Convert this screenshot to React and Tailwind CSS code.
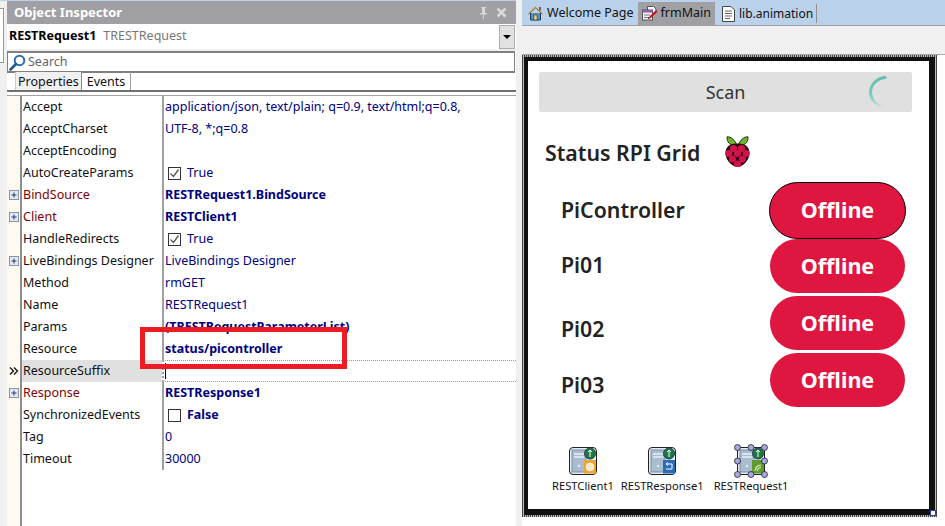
const UI = { fontFamily: '"Noto Sans", sans-serif' };

function Plus() {
  return (
    <svg width="10" height="10" viewBox="0 0 10 10" className="block">
      <rect x="0.5" y="0.5" width="9" height="9" fill="#e4e8f2" stroke="#8a94a8" />
      <path d="M2.5 5h5M5 2.5v5" stroke="#24386a" />
    </svg>
  );
}

function Check({ on }) {
  return (
    <span className="w-[13px] h-[13px] border border-[#333] bg-white flex items-center justify-center shrink-0">
      {on && (
        <svg width="11" height="11" viewBox="0 0 11 11">
          <path d="M1.5 5.5l3 3 5-7" fill="none" stroke="#555" strokeWidth="1.3" />
        </svg>
      )}
    </span>
  );
}

const rows = [
  { n: "Accept", v: "application/json, text/plain; q=0.9, text/html;q=0.8," },
  { n: "AcceptCharset", v: "UTF-8, *;q=0.8" },
  { n: "AcceptEncoding", v: "" },
  { n: "AutoCreateParams", v: "True", c: true },
  { n: "BindSource", v: "RESTRequest1.BindSource", p: true, b: true, r: true },
  { n: "Client", v: "RESTClient1", p: true, b: true, r: true },
  { n: "HandleRedirects", v: "True", c: true },
  { n: "LiveBindings Designer", v: "LiveBindings Designer", p: true },
  { n: "Method", v: "rmGET" },
  { n: "Name", v: "RESTRequest1" },
  { n: "Params", v: "(TRESTRequestParameterList)", b: true },
  { n: "Resource", v: "status/picontroller", b: true },
  { n: "ResourceSuffix", v: "", sel: true },
  { n: "Response", v: "RESTResponse1", p: true, b: true, r: true },
  { n: "SynchronizedEvents", v: "False", c: true, off: true, b: true },
  { n: "Tag", v: "0" },
  { n: "Timeout", v: "30000" },
];

function Row({ row }) {
  return (
    <div className="flex h-[22px] text-[12.5px] leading-[22px]">
      <div className="w-[13px] shrink-0 flex items-center justify-center bg-[#fffaf0]">
        {row.p && <Plus />}
        {row.sel && (
          <svg width="10" height="8" viewBox="0 0 10 8">
            <path d="M1 0.5L4.500 4 1 7.500M5 0.5L8.500 4 5 7.500" fill="none" stroke="#111" strokeWidth="1.300" />
          </svg>
        )}
      </div>
      <div className={`w-[142px] shrink-0 pl-[1px] border-l-2 border-[#8c8c8c] ${row.sel ? "bg-[#e0e0e0]" : "bg-white"} ${row.r ? "text-[#800000]" : "text-[#111]"}`}>
        {row.n}
      </div>
      <div className={`flex-1 border-l-2 border-[#a0a0a0] pl-[1px] bg-white relative whitespace-nowrap overflow-hidden ${row.b ? "font-bold" : ""} text-[#000080] ${row.sel ? "border-y border-dotted border-y-[#999]" : ""}`}>
        {row.c ? (
          <span className="flex items-center h-full pl-[3px] gap-[6px]">
            <Check on={!row.off} />
            <span>{row.v}</span>
          </span>
        ) : row.sel ? (
          <span className="block w-px h-[16px] bg-black mt-[2px]" />
        ) : (
          row.v
        )}
      </div>
    </div>
  );
}

function Home() {
  return (
    <svg width="15" height="15" viewBox="0 0 15 15" className="shrink-0">
      <path d="M2.5 7v7h10V7" fill="#5b8fb0" stroke="#243e55" />
      <path d="M0.8 7.5L7.5 1l6.7 6.5" fill="none" stroke="#d9b64a" strokeWidth="1.5" />
      <path d="M0.5 8.2L7.5 1.8l7 6.4" fill="none" stroke="#243e55" strokeWidth="0.6" />
      <rect x="6" y="9" width="3" height="5" fill="#f2d98a" stroke="#243e55" strokeWidth="0.6" />
      <rect x="11" y="1" width="2" height="3.5" fill="#7a4f9a" />
    </svg>
  );
}

function FormIcon() {
  return (
    <svg width="16" height="15" viewBox="0 0 16 15" className="shrink-0">
      <path d="M5.5 0.5h6l2.5 2.5v4h-8.5z" fill="#fff" stroke="#555" />
      <rect x="0.5" y="4" width="10" height="10" fill="#f4f4f4" stroke="#555" />
      <rect x="0.5" y="4" width="10" height="2.5" fill="#8e5bb0" />
      <path d="M2 9h6M2 11.5h5" stroke="#777" />
      <path d="M6 13l2-3 6-6 1.5 1.5-6 6z" fill="#c4161c" />
      <path d="M6 13l.8-2 1.2 1.2z" fill="#222" />
    </svg>
  );
}

function DocIcon() {
  return (
    <svg width="13" height="16" viewBox="0 0 13 16" className="shrink-0">
      <path d="M0.5 0.5h8.5l3.5 3.5v11.5H0.5z" fill="#fff" stroke="#444" />
      <path d="M3 5h7M3 7.5h7M3 10h7M3 12.5h5" stroke="#666" />
    </svg>
  );
}

function Spinner() {
  return (
    <svg width="40" height="40" viewBox="0 0 40 40" className="absolute right-[7px] top-0">
      <defs>
        <linearGradient id="sp" x1="0.7" y1="0" x2="0.8" y2="1">
          <stop offset="0" stopColor="#5fc0ad" />
          <stop offset="0.55" stopColor="#7fcdbd" />
          <stop offset="1" stopColor="#e0e0e0" />
        </linearGradient>
      </defs>
      <path d="M20 5.5A15.5 15.5 0 0 0 5.500 20A15.500 15.500 0 0 0 23 35" fill="none" stroke="url(#sp)" strokeWidth="3" strokeLinecap="round" />
    </svg>
  );
}

function Raspberry() {
  const dots = [[8.5,12.5],[16.5,12.5],[3.8,17.5],[12.5,17.5],[21.200,17.5],[7.500,23],[17.500,23],[12.5,28]];
  return (
    <svg width="25" height="31" viewBox="0 0 25 31">
      <path d="M12 9.500C10 4 6 0.500 2 0.800 1.500 6 5.500 10.500 12 9.500z" fill="#6cb52d" stroke="#1c2410" strokeWidth="0.9" />
      <path d="M13 9.500C15 4 19 0.500 23 0.800 23.500 6 19.500 10.500 13 9.500z" fill="#6cb52d" stroke="#1c2410" strokeWidth="0.9" />
      <path d="M12.5 7.500C20 7 25 11 24.500 18 24 25 17 31 12.500 31 8 31 1 25 0.500 18 0 11 5 7 12.500 7.500z" fill="#2c0814" />
      {dots.map(([x, y], i) => (
        <circle key={i} cx={x} cy={y} r="3.500" fill="#d3124a" />
      ))}
    </svg>
  );
}

function CompIcon({ kind, selected }) {
  return (
    <svg width="34" height="34" viewBox="0 0 34 34" className="block">
      <rect x="3.5" y="3.5" width="27" height="27" rx="3.5" fill="#e3edf6" stroke="#222" />
      <rect x="6" y="6" width="14" height="22" fill="#a9bcd0" stroke="#7d8ea3" />
      <path d="M8 10h10M8 13h10" stroke="#e8eef5" strokeWidth="1.5" />
      <circle cx="13" cy="22" r="1.2" fill="#e8eef5" />
      <circle cx="24" cy="9.5" r="5.5" fill="#1d7a3a" stroke="#24386a" />
      <path d="M22 8l2-2 2 2M24 6v7" stroke="#fff" strokeWidth="1" fill="none" />
      {kind === "client" && (
        <g>
          <rect x="18" y="16" width="12" height="13.5" fill="#eda52f" />
          <circle cx="24" cy="23" r="3.8" fill="#fbe7c0" stroke="#fff" />
        </g>
      )}
      {kind === "response" && (
        <g>
          <rect x="18" y="16" width="12" height="13.5" fill="#2a6cb5" />
          <path d="M21 20h6v5h-6M21 20l2-1.5M21 20l2 1.5" stroke="#fff" fill="none" />
        </g>
      )}
      {kind === "request" && (
        <g>
          <rect x="18" y="16" width="12" height="13.5" fill="#5f9a2c" />
          <path d="M21 27a6 6 0 0 1 6-6M23.5 27a3.5 3.5 0 0 1 3.5-3.5" stroke="#dff0c8" strokeWidth="1.2" fill="none" />
        </g>
      )}
      {selected &&
        [[3.5,3.5],[17,3.5],[30.5,3.5],[3.5,17],[30.5,17],[3.5,30.5],[17,30.5],[30.5,30.5]].map(([x, y], i) => (
          <circle key={i} cx={x} cy={y} r="3" fill="#a8a8e0" stroke="#222" strokeWidth="0.8" />
        ))}
    </svg>
  );
}

function Comp({ kind, label, selected, className }) {
  return (
    <div className={`flex flex-col items-center ${className}`}>
      <CompIcon kind={kind} selected={selected} />
      <span className="text-[11.2px] leading-[16px] text-[#111] whitespace-nowrap">{label}</span>
    </div>
  );
}

function Device({ name, selected, className, labelClass }) {
  return (
    <div className={`flex items-center justify-between pl-[33px] ${selected ? "pr-[23px]" : "pr-[24px]"} ${className}`}>
      <span className={`text-[21.3px] font-semibold text-[#222] leading-none ${labelClass}`}>{name}</span>
      <span className={`bg-[#df1640] text-white font-bold text-[21.5px] flex items-center justify-center rounded-full ${selected ? "w-[137px] h-[57px] border border-black" : "w-[135px] h-[54px]"}`}>
        Offline
      </span>
    </div>
  );
}

export default function App() {
  return (
    <div style={UI} className="relative w-[945px] h-[526px] flex overflow-hidden bg-[#f0f0f0]">
      <div className="w-[7px] shrink-0 border-t border-[#b9d1ea]">
        <div className="w-[4px] h-[55px] mt-[7px] border-r border-y border-[#999] bg-white" />
      </div>

      <div className="w-[509px] shrink-0 flex flex-col border-t border-[#b9d1ea] bg-white">
        <div className="h-[23px] bg-[#a0a0a4] flex items-center justify-between pl-[7px] pr-[9px]">
          <span className="text-white font-bold text-[13px] leading-none">Object Inspector</span>
          <span className="flex items-center gap-[7px]">
            <svg width="11" height="12" viewBox="0 0 11 12">
              <path d="M3 0h5v1H7v5h2v1.500H6V12H5V7.500H2V6h2V1H3z" fill="#d8d8d8" />
            </svg>
            <svg width="11" height="11" viewBox="0 0 11 11">
              <path d="M1.500 1.500l8 8M9.500 1.500l-8 8" stroke="#d8d8d8" strokeWidth="2.600" />
            </svg>
          </span>
        </div>

        <div className="h-[25px] flex items-center justify-between pl-[2px] pr-[1px]">
          <span className="text-[12.5px] whitespace-nowrap">
            <span className="font-bold text-black">RESTRequest1</span>
            <span className="text-[#777] ml-[7px]">TRESTRequest</span>
          </span>
          <span className="w-[16px] h-[24px] bg-[#e1e1e1] border border-[#adadad] flex items-center justify-center">
            <span className="w-0 h-0 border-x-[4px] border-x-transparent border-t-[4px] border-t-black" />
          </span>
        </div>

        <div className="h-[2px] bg-[#f0f0f0]" />

        <div className="h-[22px] mr-[1px] border-y-2 border-x border-[#808080] border-y-[#808080] flex items-center">
          <svg width="17" height="17" viewBox="0 0 17 17" className="ml-[1px] shrink-0">
            <circle cx="10.500" cy="6.500" r="4.800" fill="none" stroke="#2a6fb0" strokeWidth="2" />
            <path d="M7 10l-5.500 5.500" stroke="#1f5a94" strokeWidth="2.600" strokeLinecap="round" />
          </svg>
          <span className="text-[12.5px] text-[#666] ml-[2px]">Search</span>
        </div>

        <div className="h-[20px] flex items-stretch border-b-2 border-[#707070] pl-[8px] text-[12.5px] text-[#111] shrink-0 mt-[-1px]">
          <span className="bg-[#f0f0f0] border-l border-[#ccc] px-[2px] leading-[19px]">Properties</span>
          <span className="border-r border-[#a0a0a0] border-l border-l-[#888] px-[5px] leading-[19px]">Events</span>
        </div>
        <div className="h-[4px] border-b border-[#a0a0a0]" />

        <div className="flex-1 flex flex-col">
          <div>
            {rows.map((r) => (
              <Row key={r.n} row={r} />
            ))}
          </div>
          <div className="flex-1 flex">
            <div className="w-[13px] bg-[#fffaf0]" />
            <div className="border-l-2 border-[#8c8c8c]" />
          </div>
        </div>
      </div>

      <div className="w-[6px] shrink-0 bg-[#f0f0f0]" />

      <div className="flex-1 flex flex-col bg-white">
        <div className="h-[26px] bg-[#b9d1ea] border-b border-[#a0a0a0] flex items-stretch pl-[2px] pt-[2px] text-[12.5px] text-[#111] shrink-0">
          <span className="flex items-center gap-[4px] px-[4px] whitespace-nowrap"><Home />Welcome Page</span>
          <span className="flex items-center gap-[3px] pl-[4px] pr-[4px] bg-[#a0a0a4] whitespace-nowrap"><FormIcon />frmMain</span>
          <span className="flex items-center gap-[4px] pl-[7px] pr-[3px] border-r border-[#909090] my-[2px] whitespace-nowrap text-[12px]"><DocIcon />lib.animation</span>
        </div>
        <div className="h-[29px] bg-[#f0f0f0] border-b border-[#a8a8a8] shrink-0" />

        <div className="w-[415px] h-[462px] p-[2px] bg-[repeating-linear-gradient(90deg,#444_0_1px,#bbb_1px_2px)] relative">
          <div className="w-full h-full bg-white border-t-4 border-l-4 border-r-[6px] border-b-[6px] border-[#111] flex flex-col">
            <div className="relative h-10 mt-[11px] ml-[11px] mr-[17px] bg-[#e0e0e0] rounded-[2px] flex items-center justify-center text-[18px] text-[#333] shrink-0">
              Scan
              <Spinner />
            </div>
            <div className="h-10 mt-5 ml-[17px] flex items-center shrink-0">
              <span className="text-[21.3px] font-semibold text-[#222] leading-none mt-[2px]">Status RPI Grid</span>
              <span className="ml-[25px] -mt-[2px]"><Raspberry /></span>
            </div>
            <Device name="PiController" selected className="mt-[10px]" labelClass="-mt-[1px]" />
            <Device name="Pi01" labelClass="-mt-[2px]" />
            <Device name="Pi02" className="mt-[3px]" labelClass="mt-[12px]" />
            <Device name="Pi03" className="mt-[3px]" labelClass="mt-[10px]" />
            <div className="flex mt-[37px] ml-[24px]">
              <Comp kind="client" label="RESTClient1" />
              <Comp kind="response" label="RESTResponse1" className="ml-[7px]" />
              <Comp kind="request" label="RESTRequest1" selected className="ml-[10px]" />
            </div>
          </div>
          <span className="absolute right-[1px] bottom-[1px] w-[6px] h-[6px] bg-white border border-[#2040c0]" />
        </div>
      </div>

      <div className="absolute left-[140px] top-[327px] w-[207px] h-[42px] border-[5px] border-[#ed1c24]" />
    </div>
  );
}
